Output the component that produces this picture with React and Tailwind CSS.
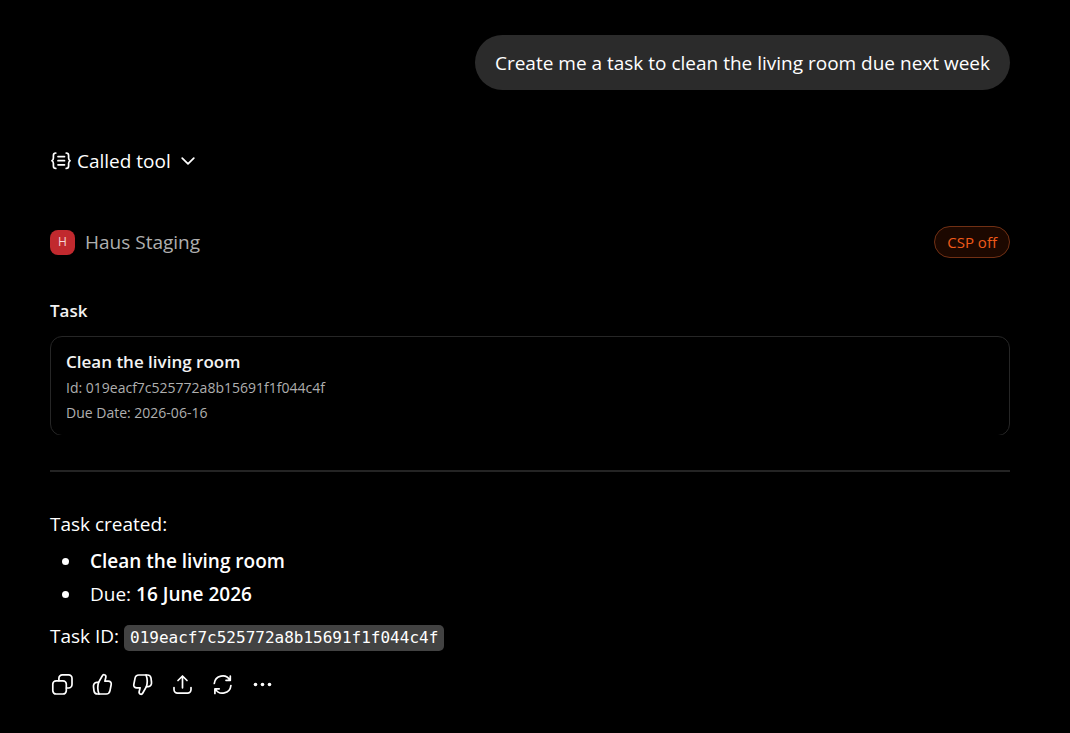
import React from "react";

const TASK_ID = "019eacf7c525772a8b15691f1f044c4f";

/* ================= ICONS ================= */

const Icon = ({ children }) => (
  <svg
    width="25"
    height="25"
    viewBox="0 0 25 25"
    fill="none"
    stroke="currentColor"
    strokeWidth="1.7"
    strokeLinecap="round"
    strokeLinejoin="round"
    aria-hidden="true"
  >
    {children}
  </svg>
);

const ThumbShape = () => (
  <>
    <path d="M8.6 10.3 12.2 4c.5-1 1.3-1.500 2.200-1.200 1.300.4 1.700 1.500 1.400 2.700l-.9 3.600h3.400c2 0 3.300 1.500 2.900 3.400l-1.200 6.100c-.4 2.200-1.900 3.400-3.900 3.400H7.600c-2.100 0-3.300-1.200-3.600-3.200l-.5-4c-.3-2.400 1-4.500 3.200-4.500z" />
    <path d="M8.600 10.300c-1.100 3.600-1.100 8 .4 11.700" />
  </>
);

const actions = [
  {
    label: "Copy",
    icon: (
      <>
        <rect x="2.8" y="8.8" width="13.5" height="13.2" rx="3.3" />
        <path d="M8.9 8.6V6.3a3.4 3.4 0 0 1 3.4-3.4h6.3A3.4 3.4 0 0 1 22 6.3v6.300a3.4 3.4 0 0 1-3.4 3.4h-2.1" />
      </>
    ),
  },
  { label: "Good response", icon: <ThumbShape /> },
  {
    label: "Bad response",
    icon: (
      <g transform="rotate(180 12.5 12.5)">
        <ThumbShape />
      </g>
    ),
  },
  {
    label: "Share",
    icon: (
      <>
        <path d="M12.5 15.8V4.2M8 8.5 12.5 4 17 8.5" />
        <path d="M4 15.6v2a3.5 3.5 0 0 0 3.5 3.5h10a3.5 3.5 0 0 0 3.5-3.5v-2" />
      </>
    ),
  },
  {
    label: "Try again",
    icon: (
      <>
        <path d="M4.3 11.5A8.4 8.4 0 0 1 20 8.2M20.3 4v4.3H16" />
        <path d="M20.9 13.5a8.4 8.4 0 0 1-15.7 3.3M4.9 21.5v-4.7h4.3" />
      </>
    ),
  },
  {
    label: "More",
    icon: (
      <g fill="currentColor" stroke="none">
        <circle cx="5.5" cy="12.5" r="1.8" />
        <circle cx="12.5" cy="12.5" r="1.8" />
        <circle cx="19.5" cy="12.5" r="1.8" />
      </g>
    ),
  },
];

const BracesIcon = () => (
  <svg
    width="22"
    height="20"
    viewBox="0 0 22 20"
    fill="none"
    stroke="currentColor"
    strokeWidth="1.7"
    strokeLinecap="round"
    strokeLinejoin="round"
    aria-hidden="true"
  >
    <path d="M5.8 2c-1.700 0-2.400.8-2.400 2.400v2.500c0 1.300-.5 2.300-1.500 2.800 1 .5 1.500 1.500 1.500 2.800V15c0 1.600.7 2.400 2.400 2.400" />
    <path d="M16.2 2c1.700 0 2.400.8 2.400 2.400v2.500c0 1.300.5 2.300 1.500 2.800-1 .5-1.500 1.500-1.500 2.800V15c0 1.600-.7 2.400-2.400 2.400" />
    <path d="M8 5.600h6.500M8 9.700h6.500M8 13.800h6.500" />
  </svg>
);

const ChevronIcon = () => (
  <svg
    width="14"
    height="8"
    viewBox="0 0 14 8"
    fill="none"
    stroke="currentColor"
    strokeWidth="1.7"
    strokeLinecap="round"
    strokeLinejoin="round"
    aria-hidden="true"
  >
    <path d="m1.2 1.2 5.8 5.6 5.8-5.6" />
  </svg>
);

/* ================= SECTIONS ================= */

const UserMessage = ({ children }) => (
  <div className="flex justify-end">
    <p className="rounded-[28px] bg-[#2b2b2b] px-5 pt-[14px] pb-[13px] leading-7">
      {children}
    </p>
  </div>
);

const TaskWidget = () => (
  <section className="mt-10 border-b-2 border-[#242424] pb-[35px]">
    <h2 className="text-[17px] leading-[26px] font-semibold text-[#f3f3f3]">Task</h2>
    {/* the frame crops the card's lower edge */}
    <div className="mt-3 h-[99px] overflow-hidden">
      <div className="h-[100px] rounded-xl border border-[#262626] px-[15px] pt-3">
        <h3 className="text-[17px] leading-[26px] font-semibold text-[#f3f3f3]">
          Clean the living room
        </h3>
        <p className="text-sm leading-[25px] text-[#afafaf]">Id: {TASK_ID}</p>
        <p className="text-sm leading-[25px] text-[#afafaf]">Due Date: 2026-06-16</p>
      </div>
    </div>
  </section>
);

const App = () => (
  <main className="min-h-screen bg-black pt-[35px] pr-[60px] pb-8 pl-[50px] font-['Open_Sans','Noto_Sans',sans-serif] text-[19px] text-white">
    <UserMessage>Create me a task to clean the living room due next week</UserMessage>

    <button type="button" className="mt-14 flex items-center leading-[30px]">
      <BracesIcon />
      <span className="ml-[5px]">Called tool</span>
      <span className="ml-[10px]">
        <ChevronIcon />
      </span>
    </button>

    <div className="mt-[50px] flex h-8 items-center">
      <span className="flex size-[25px] items-center justify-center rounded-lg bg-[#c1292e] text-xs text-[#f5d5d5]">
        H
      </span>
      <span className="ml-[10px] text-[#afafaf]">Haus Staging</span>
      <button
        type="button"
        className="ml-auto h-8 rounded-full border border-[#713014] bg-[#1c0800] px-3 text-[15px] font-medium text-[#f05a1a]"
      >
        CSP off
      </button>
    </div>

    <TaskWidget />

    <article className="mt-9 leading-[33px]">
      <p>Task created:</p>
      <ul className="mt-1 list-disc pl-8">
        <li className="pl-2">
          <strong className="font-semibold">Clean the living room</strong>
        </li>
        <li className="pl-2">
          Due: <strong className="font-semibold">16 June 2026</strong>
        </li>
      </ul>
      <p className="mt-[9px]">
        Task ID:{" "}
        <code className="inline-block rounded-[5px] bg-[#424242] px-[6px] font-['DejaVu_Sans_Mono',monospace] text-base leading-[26px]">
          {TASK_ID}
        </code>
      </p>
    </article>

    <div className="mt-[19px] flex gap-[15px]">
      {actions.map((action) => (
        <button key={action.label} type="button" aria-label={action.label}>
          <Icon>{action.icon}</Icon>
        </button>
      ))}
    </div>
  </main>
);

export default App;
